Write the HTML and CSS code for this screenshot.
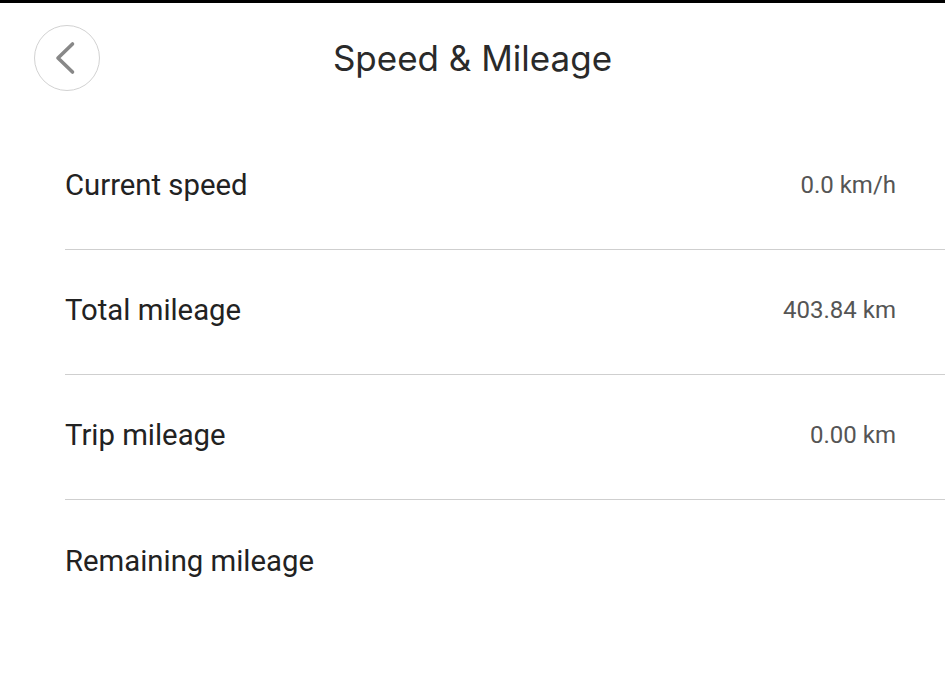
FILE: index.html
```html
<!DOCTYPE html>
<html>
<head>
<meta charset="utf-8">
<link rel="stylesheet" href="styles.css">
</head>
<body>
<div class="topbar"></div>
<header class="header">
  <div class="header-left">
    <button class="back" aria-label="Back">
      <svg width="22" height="34" viewBox="0 0 22 34"><path d="M18.5 3 L4 17 L18.5 31" fill="none" stroke="#888" stroke-width="3.6" stroke-linecap="round" stroke-linejoin="round"/></svg>
    </button>
  </div>
  <h1 class="title">Speed &amp; Mileage</h1>
  <div></div>
</header>
<ul class="list">
  <li class="row"><span class="label">Current speed</span><span class="value">0.0 km/h</span></li>
  <li class="row"><span class="label">Total mileage</span><span class="value">403.84 km</span></li>
  <li class="row"><span class="label">Trip mileage</span><span class="value">0.00 km</span></li>
  <li class="row last"><span class="label">Remaining mileage</span><span class="value"></span></li>
</ul>
</body>
</html>
```
FILE: styles.css
```css
html, body {
  margin: 0;
  padding: 0;
  background: #fff;
}
body {
  width: 945px;
  height: 686px;
  overflow: hidden;
  font-family: Roboto, "Liberation Sans", sans-serif;
}
.topbar {
  height: 3px;
  background: #000;
}
.header {
  height: 122px;
  display: grid;
  grid-template-columns: 1fr auto 1fr;
  align-items: start;
  box-sizing: border-box;
  padding-top: 22px;
}
.header-left {
  padding-left: 34px;
}
.back {
  width: 66px;
  height: 66px;
  border-radius: 50%;
  border: 1.5px solid #d2d2d2;
  background: #fff;
  padding: 0 5px 0 0;
  display: flex;
  align-items: center;
  justify-content: center;
  box-sizing: border-box;
}
.title {
  margin: 0;
  height: 66px;
  line-height: 66px;
  font-family: Inter, "Liberation Sans", sans-serif;
  font-weight: 400;
  font-size: 35px;
  color: #2a2a2a;
}
.list {
  list-style: none;
  margin: 0;
  padding: 0;
}
.row {
  margin-left: 65px;
  padding-right: 49px;
  padding-bottom: 4px;
  height: 125px;
  box-sizing: border-box;
  border-bottom: 1px solid #cfcfcf;
  display: flex;
  align-items: center;
  justify-content: space-between;
}
.row.last {
  border-bottom: none;
}
.label {
  font-size: 29.3px;
  color: #222;
}
.value {
  font-size: 24px;
  color: #555;
}
```
